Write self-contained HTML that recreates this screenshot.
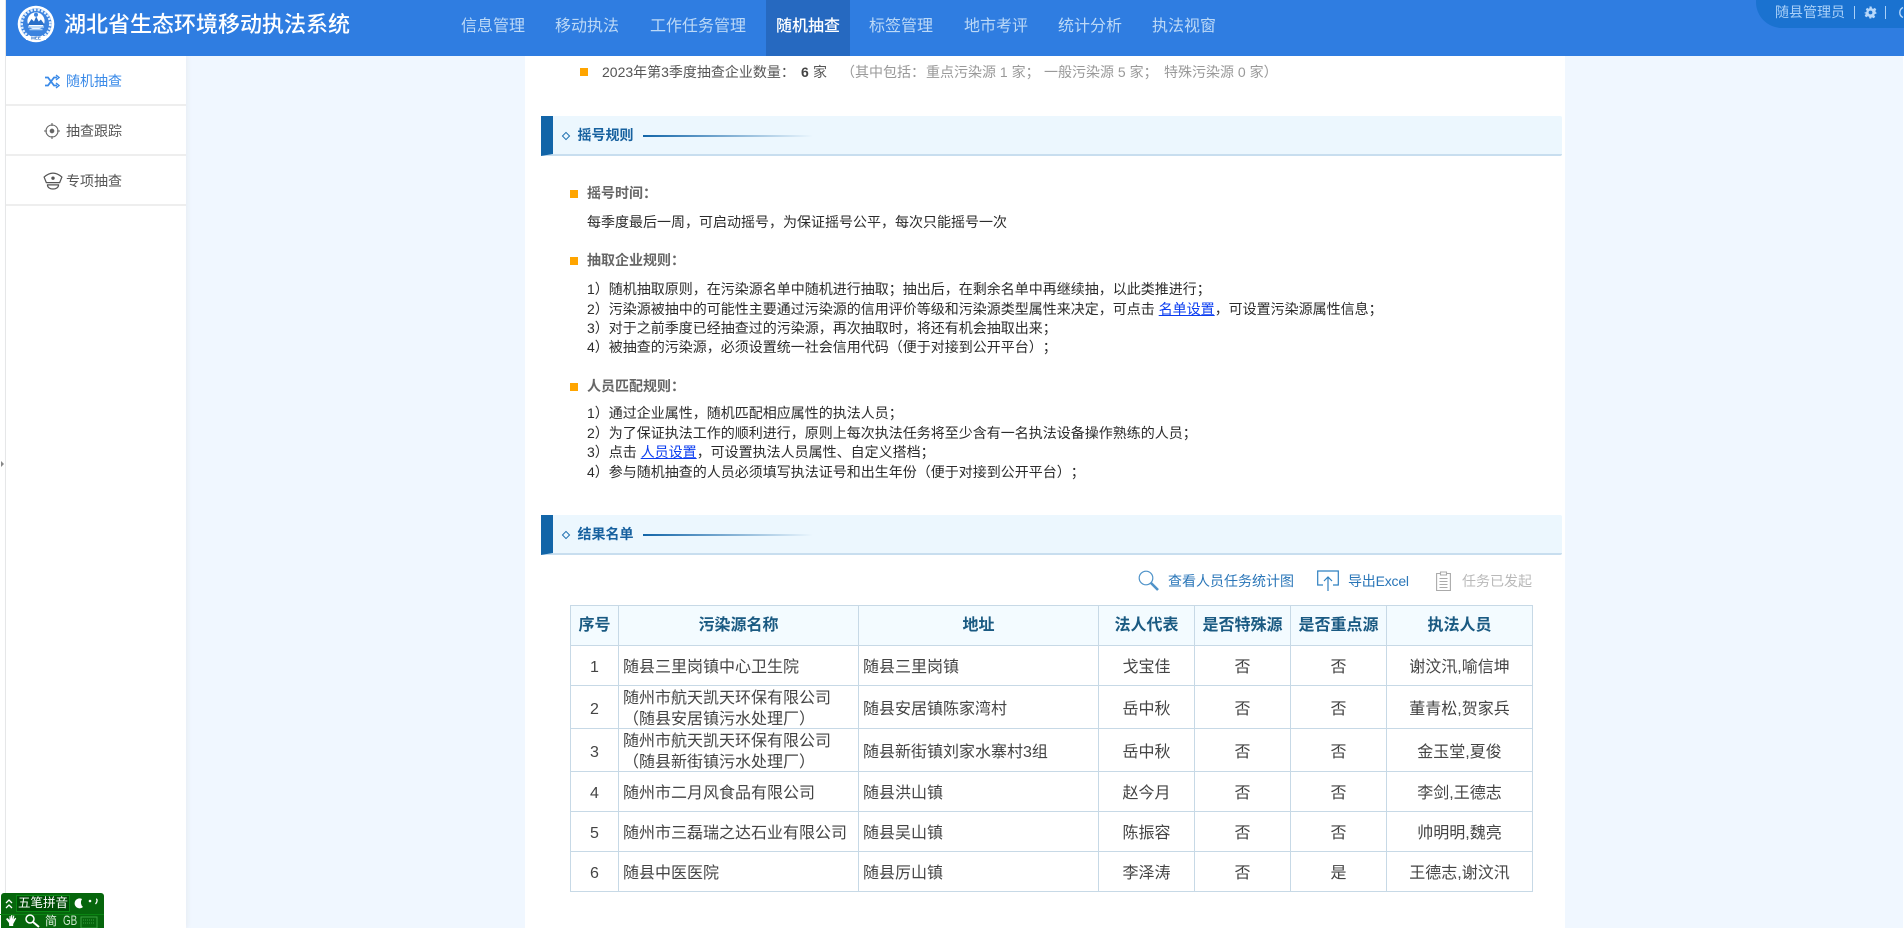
<!DOCTYPE html>
<html lang="zh-CN"><head><meta charset="utf-8"><title>湖北省生态环境移动执法系统</title>
<style>
*{box-sizing:border-box}
html,body{margin:0;padding:0;width:1904px;height:928px;overflow:hidden;background:#fff;font-family:"Liberation Sans","Noto Sans CJK SC",sans-serif;font-size:14px;color:#333;text-spacing-trim:space-all}
.a{position:absolute;white-space:nowrap}
#hdr{left:6px;right:0;top:0;height:56px;background:#2f7de1;position:absolute}
.nav{position:absolute;top:0;height:56px;line-height:53px;font-size:16px;color:#bcd9f7;white-space:nowrap}
.nav.on{color:#fff;background:#2669c0;width:84px;left:766px;text-align:center;font-weight:500}
.side{position:absolute;left:6px;width:180px;height:50px;border-bottom:2px solid #eee;background:#fff}
.side span{position:absolute;left:60px;top:0;line-height:50px;color:#555;font-size:14px}
.sec{position:absolute;left:541px;width:1021px;height:40px;background:#ecf7fe;border-bottom:2px solid #c8deef;border-left:12px solid #1265a8;border-radius:0 2px 2px 0}
.sec b{position:absolute;left:24.5px;top:0;line-height:39px;color:#17619f;font-size:14px;font-weight:700}
.sec i{position:absolute;left:90px;top:19px;width:170px;height:1.5px;background:linear-gradient(90deg,#1265a8,rgba(18,101,168,0))}
.sec u{position:absolute;left:10px;top:16.5px;width:6px;height:6px;border:1.3px solid #1d6fb0;transform:rotate(45deg)}
.sq{position:absolute;width:8px;height:8px;background:#ffa500}
.tl{color:#666;font-weight:700}
.ln{color:#2b2b2b;line-height:20px}
.gy{top:62px;line-height:20px;color:#999}
a{color:#0a3cf0;text-decoration:underline}
table{position:absolute;left:570px;top:605px;width:962px;border-collapse:collapse;table-layout:fixed;font-size:16px;color:#444}
td,th{border:1.4px solid #c7d9e6;text-align:center;padding:0;line-height:21px}
th{background:#f3fbff;color:#1a5a82;font-weight:700;height:40px}
td.l{text-align:left;padding-left:4px}
td span{position:relative;top:2px;display:inline-block}
tr.r{height:40px}tr.t{height:43px}
</style></head><body>
<div class="a" style="left:5px;top:0;width:1px;height:928px;background:#e6e6e6"></div>
<div class="a" style="left:1px;top:461px;width:0;height:0;border-left:3px solid #888;border-top:3px solid transparent;border-bottom:3px solid transparent"></div>
<div class="a" style="left:6px;top:56px;width:1897px;height:872px;background:#f0f7ff"></div>
<div class="a" style="left:525px;top:56px;width:1040px;height:872px;background:#fff"></div>
<div class="a" style="left:6px;top:56px;width:180px;height:872px;background:#fff;box-shadow:2px 0 4px #e9eef5"></div>

<div id="hdr"></div>
<svg class="a" style="left:17px;top:5px" width="38" height="38" viewBox="0 0 38 38">
<circle cx="19" cy="19" r="18.3" fill="#fff"/><circle cx="19" cy="19" r="15.6" fill="#3b83df"/>
<circle cx="19" cy="19" r="14.2" fill="none" stroke="#dfeeff" stroke-width="2.4" stroke-dasharray="2.2 1.4"/>
<circle cx="19" cy="16" r="8.6" fill="#fff"/>
<path d="M10.5 20l4-6 2.5 2.5 2.2-5 2.5 5 2.2-2 4 5.500z" fill="#2a6fc8"/>
<circle cx="19" cy="9.800" r="2" fill="#3b83df"/>
<path d="M11 22h16M12.500 24.500h13" stroke="#a9cdf5" stroke-width="1.400"/>
<path d="M9 31h20v4H9z" fill="#fff"/>
<text x="19" y="34.600" font-size="4.500" font-weight="700" text-anchor="middle" fill="#2a6fc8" font-family="Liberation Sans">MEE</text>
</svg>
<div class="a" style="left:64px;top:10px;line-height:30px;font-size:22px;color:#fff;font-weight:500">湖北省生态环境移动执法系统</div>
<div class="nav" style="left:461px">信息管理</div>
<div class="nav" style="left:555px">移动执法</div>
<div class="nav" style="left:650px">工作任务管理</div>
<div class="nav on">随机抽查</div>
<div class="nav" style="left:869px">标签管理</div>
<div class="nav" style="left:964px">地市考评</div>
<div class="nav" style="left:1058px">统计分析</div>
<div class="nav" style="left:1152px">执法视窗</div>

<div class="a" style="left:1756px;top:0;width:148px;height:28px;background:#1a72d0;border-radius:0 0 0 26px"></div>
<div class="a" style="left:1775px;top:1px;line-height:22px;color:#a9d0f8;font-size:14px">随县管理员</div>
<div class="a" style="left:1854px;top:6px;width:1px;height:13px;background:#a9d0f8"></div>
<svg class="a" style="left:1864px;top:6px" width="13" height="13" viewBox="0 0 24 24"><path fill="#b8d8fa" d="M10 1h4l.7 3.300 2.300 1 2.900-1.800 2.800 2.800-1.800 2.900 1 2.300L23 12v2l-3.100.7-1 2.300 1.800 2.900-2.800 2.800-2.900-1.800-2.300 1L14 23h-4l-.7-3.100-2.300-1-2.900 1.800-2.800-2.800 1.800-2.900-1-2.300L1 14v-2l3.100-.7 1-2.300-1.800-2.900 2.800-2.800L8 5l2.300-1zM12 8.500a3.500 3.500 0 1 0 0 7 3.500 3.500 0 0 0 0-7z"/></svg>
<div class="a" style="left:1885px;top:6px;width:1px;height:13px;background:#a9d0f8"></div>
<svg class="a" style="left:1897px;top:5px" width="7" height="15" viewBox="0 0 7 15" fill="none" stroke="#b8d8fa" stroke-width="1.400"><path d="M6 2.500a5.500 5.500 0 0 0 0 10"/></svg>

<div class="side" style="top:56px"><span style="color:#3a8ae8">随机抽查</span></div>
<div class="side" style="top:106px"><span>抽查跟踪</span></div>
<div class="side" style="top:156px"><span>专项抽查</span></div>
<svg class="a" style="left:44px;top:74px" width="16" height="15" viewBox="0 0 16 15" fill="none" stroke="#3a8ae8" stroke-width="1.800"><path d="M1 3.500h3l6 8h3M1 11.500h3l6-8h3"/><path d="M12 1l3 2.500-3 2.500M12 9l3 2.500-3 2.500" stroke-width="1.400"/></svg>
<svg class="a" style="left:44px;top:123px" width="16" height="16" viewBox="0 0 16 16" fill="none" stroke="#666" stroke-width="1.100"><circle cx="8" cy="8" r="6"/><circle cx="8" cy="8" r="1.800" fill="#666"/><path d="M8 0v3M8 13v3M0 8h3M13 8h3"/></svg>
<svg class="a" style="left:43px;top:172px" width="20" height="19" viewBox="0 0 18 17" fill="none" stroke="#555" stroke-width="1.100"><path d="M1 4.500C4 2 6.500 1 9 1s5 1 8 3.500l-2 5H3z"/><path d="M3.500 11.500h11M4 11.500c0 5 10 5 10 0"/><circle cx="9" cy="5.500" r="1" fill="#555"/></svg>

<div class="sq" style="left:580px;top:68px"></div>
<div class="a" style="left:602px;top:62px;line-height:20px;color:#555">2023年第3季度抽查企业数量：</div>
<div class="a" style="left:801px;top:62px;line-height:20px;color:#444;font-weight:700">6</div>
<div class="a" style="left:813px;top:62px;line-height:20px;color:#555">家</div>
<div class="a gy" style="left:841px">（其中包括：</div>
<div class="a gy" style="left:926px">重点污染源 1 家；</div>
<div class="a gy" style="left:1044px">一般污染源 5 家；</div>
<div class="a gy" style="left:1164px">特殊污染源 0 家）</div>

<div class="sec" style="top:116px"><u></u><b>摇号规则</b><i></i></div>

<div class="sq" style="left:570px;top:190px"></div>
<div class="a tl" style="left:587px;top:183px;line-height:20px">摇号时间：</div>
<div class="a ln" style="left:587px;top:212px">每季度最后一周，可启动摇号，为保证摇号公平，每次只能摇号一次</div>

<div class="sq" style="left:570px;top:257px"></div>
<div class="a tl" style="left:587px;top:250px;line-height:20px">抽取企业规则：</div>
<div class="a ln" style="left:587px;top:279px">1）随机抽取原则，在污染源名单中随机进行抽取；抽出后，在剩余名单中再继续抽，以此类推进行；</div>
<div class="a ln" style="left:587px;top:298.500px">2）污染源被抽中的可能性主要通过污染源的信用评价等级和污染源类型属性来决定，可点击 <a>名单设置</a>，可设置污染源属性信息；</div>
<div class="a ln" style="left:587px;top:318px">3）对于之前季度已经抽查过的污染源，再次抽取时，将还有机会抽取出来；</div>
<div class="a ln" style="left:587px;top:337px">4）被抽查的污染源，必须设置统一社会信用代码（便于对接到公开平台）；</div>

<div class="sq" style="left:570px;top:383px"></div>
<div class="a tl" style="left:587px;top:376px;line-height:20px">人员匹配规则：</div>
<div class="a ln" style="left:587px;top:403px">1）通过企业属性，随机匹配相应属性的执法人员；</div>
<div class="a ln" style="left:587px;top:423px">2）为了保证执法工作的顺利进行，原则上每次执法任务将至少含有一名执法设备操作熟练的人员；</div>
<div class="a ln" style="left:587px;top:442px">3）点击 <a>人员设置</a>，可设置执法人员属性、自定义搭档；</div>
<div class="a ln" style="left:587px;top:462px">4）参与随机抽查的人员必须填写执法证号和出生年份（便于对接到公开平台）；</div>

<div class="sec" style="top:515px"><u></u><b>结果名单</b><i></i></div>

<svg class="a" style="left:1138px;top:570px" width="22" height="22" viewBox="0 0 22 22" fill="none" stroke="#4f93c9"><circle cx="8" cy="8" r="6.800" stroke-width="1.200"/><path d="M13 13l7 7" stroke-width="2.600"/></svg>
<div class="a" style="left:1168px;top:571px;line-height:20px;color:#2a76b8">查看人员任务统计图</div>
<svg class="a" style="left:1317px;top:570px" width="22" height="22" viewBox="0 0 22 22" fill="none" stroke="#2f80c0" stroke-width="1.200"><path d="M6 15H.7V1h20.600v14H16"/><path d="M11 21V7M7 11l4-4 4 4"/></svg>
<div class="a" style="left:1348px;top:571px;line-height:20px;color:#2a76b8;letter-spacing:-.2px">导出Excel</div>
<svg class="a" style="left:1436px;top:571px" width="15" height="20" viewBox="0 0 15 20" fill="none" stroke="#aaa" stroke-width="1.100"><path d="M4 2.500H.6v17h13.800v-17H11"/><path d="M4.500 1h6v3h-6zM3.500 7.500h8M3.500 10.500h8M3.500 13.500h8M3.500 16.500h8"/></svg>
<div class="a" style="left:1462px;top:571px;line-height:20px;color:#b9b9b9">任务已发起</div>

<table>
<colgroup><col style="width:48px"><col style="width:240px"><col style="width:240px"><col style="width:96px"><col style="width:96px"><col style="width:96px"><col style="width:146px"></colgroup>
<tr><th>序号</th><th>污染源名称</th><th>地址</th><th>法人代表</th><th>是否特殊源</th><th>是否重点源</th><th>执法人员</th></tr>
<tr class="r"><td><span>1</span></td><td class="l"><span>随县三里岗镇中心卫生院</span></td><td class="l"><span>随县三里岗镇</span></td><td><span>戈宝佳</span></td><td><span>否</span></td><td><span>否</span></td><td><span>谢汶汛,喻信坤</span></td></tr>
<tr class="t"><td><span>2</span></td><td class="l"><span>随州市航天凯天环保有限公司<br>（随县安居镇污水处理厂）</span></td><td class="l"><span>随县安居镇陈家湾村</span></td><td><span>岳中秋</span></td><td><span>否</span></td><td><span>否</span></td><td><span>董青松,贺家兵</span></td></tr>
<tr class="t"><td><span>3</span></td><td class="l"><span>随州市航天凯天环保有限公司<br>（随县新街镇污水处理厂）</span></td><td class="l"><span>随县新街镇刘家水寨村3组</span></td><td><span>岳中秋</span></td><td><span>否</span></td><td><span>否</span></td><td><span>金玉堂,夏俊</span></td></tr>
<tr class="r"><td><span>4</span></td><td class="l"><span>随州市二月风食品有限公司</span></td><td class="l"><span>随县洪山镇</span></td><td><span>赵今月</span></td><td><span>否</span></td><td><span>否</span></td><td><span>李剑,王德志</span></td></tr>
<tr class="r"><td><span>5</span></td><td class="l"><span>随州市三磊瑞之达石业有限公司</span></td><td class="l"><span>随县吴山镇</span></td><td><span>陈振容</span></td><td><span>否</span></td><td><span>否</span></td><td><span>帅明明,魏亮</span></td></tr>
<tr class="r"><td><span>6</span></td><td class="l"><span>随县中医医院</span></td><td class="l"><span>随县厉山镇</span></td><td><span>李泽涛</span></td><td><span>否</span></td><td><span>是</span></td><td><span>王德志,谢汶汛</span></td></tr>
</table>

<div class="a" style="left:1px;top:893px;width:103px;height:35px;background:#06660c;border-radius:3px 3px 0 0"></div>
<div class="a" style="left:16px;top:895px;width:54px;height:17px;background:#004d05;border:1px solid #0a8a14;line-height:15px;font-size:12.500px;color:#fff;text-align:center">五笔拼音</div>
<svg class="a" style="left:0;top:893px" width="104" height="35" viewBox="0 0 104 35" fill="none">
<path d="M6 10l3-3 3 3M6 15l3-3 3 3" stroke="#fff" stroke-width="1.300"/>
<path d="M82 6a5 5 0 1 0 1 8 6 6 0 0 1-1-8z" fill="#fff"/><circle cx="90" cy="8" r="1.300" fill="#fff"/><path d="M96 6c1.500 0 1.500 3-.5 5" stroke="#fff" stroke-width="1.300"/>
<path d="M0 21.500h104" stroke="#0a8412"/>
<path d="M9 30l-3-4 1.500-1 2 2V23h1v3l.8-4h1l-.1 4 1.200-3.500 1 .3-.8 3.700 1.800-1.800.8.800-3 5.500v2h-4z" fill="#fff"/>
<circle cx="30" cy="26" r="4" stroke="#fff" stroke-width="1.500"/><path d="M33 29l6 5" stroke="#fff" stroke-width="2"/>
<rect x="81" y="24" width="16" height="11" stroke="#3aa03f"/><path d="M83 27h12M83 30h12" stroke="#3aa03f" stroke-dasharray="1 1"/>
</svg>
<div class="a" style="left:45px;top:914px;line-height:14px;font-size:12px;color:#dff0df">简</div>
<div class="a" style="left:63px;top:913px;line-height:15px;font-size:14px;color:#cfe8cf;transform:scaleX(.7);transform-origin:left">GB</div>
</body></html>
